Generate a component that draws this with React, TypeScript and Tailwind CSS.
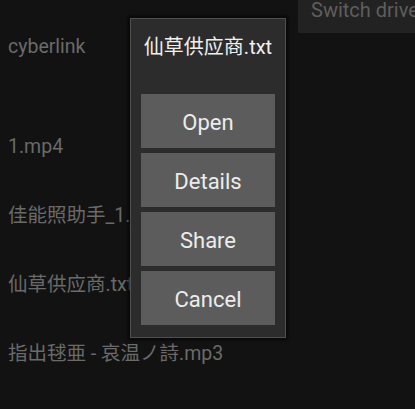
const rows = [
  { name: "1.mp4" },
  { name: "佳能照助手_1.jpg" },
  { name: "仙草供应商.txt" },
  { name: "指出毬亜 - 哀温ノ詩.mp3" },
];

const actions = ["Open", "Details", "Share", "Cancel"];

export default function App() {
  return (
    <div
      className="relative w-[415px] h-[409px] overflow-hidden bg-[#121212]"
      style={{ fontFamily: 'Roboto, "Noto Sans CJK SC", sans-serif' }}
    >
      {/* Switch drive */}
      <div className="absolute right-0 top-0 w-[117px] h-[33px] bg-[#222222] pl-[13px] overflow-hidden">
        <span className="block whitespace-nowrap text-[20px] leading-[22px] -mt-[1px] text-[#5e5e5e]">
          Switch drive
        </span>
      </div>

      {/* file list */}
      <div className="flex flex-col pt-[12px] pl-[8px] text-[19.5px] text-[#6a6a6a]">
        <div className="h-[69px] flex items-center whitespace-nowrap leading-[26px]">cyberlink</div>
        <div className="h-[31px]" />
        {rows.map((r) => (
          <div key={r.name} className="h-[69px] flex items-center whitespace-nowrap leading-[26px]">
            {r.name}
          </div>
        ))}
      </div>

      {/* dialog */}
      <div className="absolute left-[130px] top-[18px] w-[156px] h-[320px] border border-[#505050] bg-[#2c2c2c] shadow-[0_0_3px_2px_rgba(0,0,0,0.6)] flex flex-col px-[10px]">
        <div className="h-[75px] pt-[16px] text-center text-[20px] leading-[24px] text-[#f0f0f0] whitespace-nowrap">
          仙草供应商.txt
        </div>
        <div className="flex flex-col gap-[5px]">
          {actions.map((a) => (
            <div
              key={a}
              className="h-[54px] bg-[#5c5c5c] flex items-center justify-center pt-[2px] text-[22px] text-[#ececec]"
            >
              {a}
            </div>
          ))}
        </div>
      </div>
    </div>
  );
}
